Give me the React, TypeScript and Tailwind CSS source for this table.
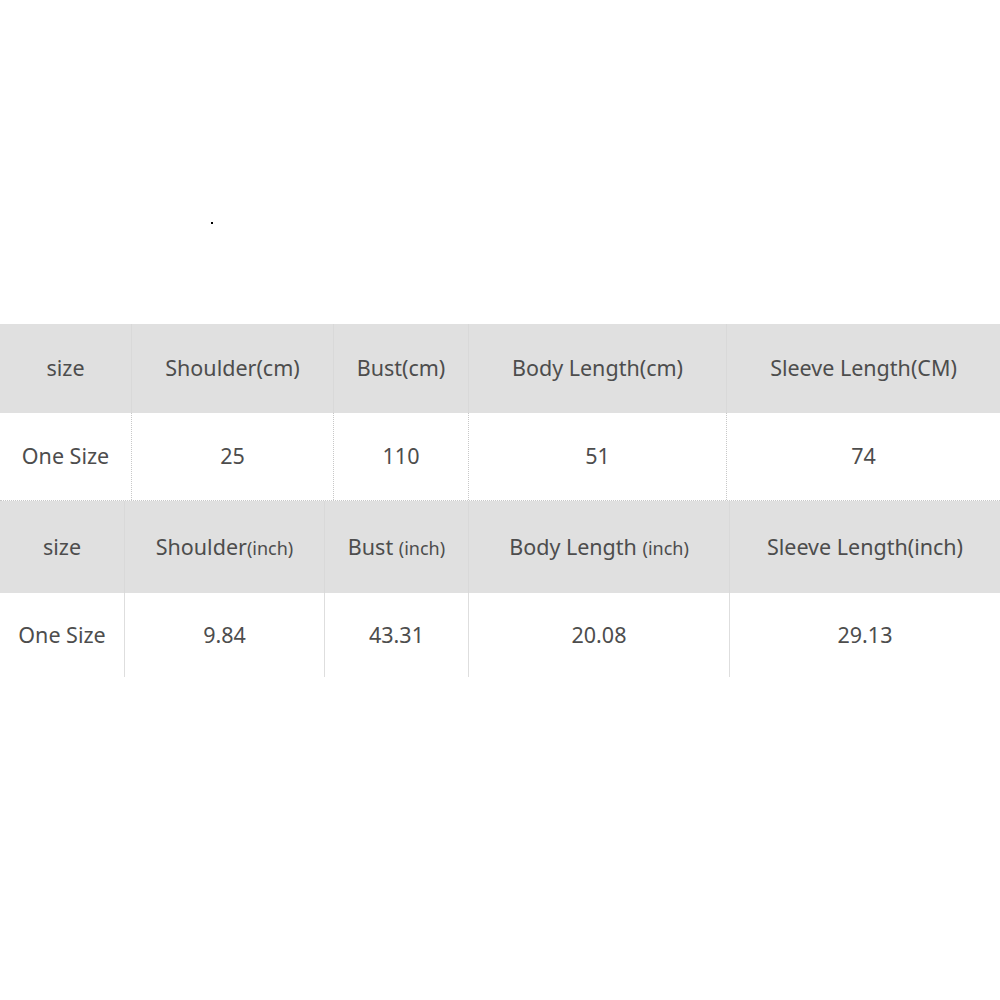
const cm = {
  cols: "grid-cols-[131px_202px_135px_258px_274px]",
  head: [
    { main: "size" },
    { main: "Shoulder(cm)" },
    { main: "Bust(cm)" },
    { main: "Body Length(cm)" },
    { main: "Sleeve Length(CM)" },
  ],
  row: ["One Size", "25", "110", "51", "74"],
};

const inch = {
  cols: "grid-cols-[124px_200px_144px_261px_271px]",
  head: [
    { main: "size" },
    { main: "Shoulder", unit: "(inch)" },
    { main: "Bust ", unit: "(inch)" },
    { main: "Body Length ", unit: "(inch)" },
    { main: "Sleeve Length(inch)" },
  ],
  row: ["One Size", "9.84", "43.31", "20.08", "29.13"],
};

type Head = { main: string; unit?: string };

function SizeTable({
  cols,
  head,
  row,
  headH,
  rowH,
  dotted,
}: {
  cols: string;
  head: Head[];
  row: string[];
  headH: string;
  rowH: string;
  dotted?: boolean;
}) {
  return (
    <div>
      <div className={`grid ${cols} bg-[#e0e0e0] ${headH}`}>
        {head.map((h, i) => (
          <div
            key={i}
            className={`flex items-center justify-center ${
              i > 0 ? "border-l border-[#d9d9d9]" : ""
            }`}
          >
            <span className="whitespace-pre">
              {h.main}
              {h.unit && <span className="text-[18px]">{h.unit}</span>}
            </span>
          </div>
        ))}
      </div>
      <div className={`grid ${cols} bg-white ${rowH}`}>
        {row.map((v, i) => (
          <div
            key={i}
            className={`flex items-center justify-center ${
              i > 0
                ? dotted
                  ? "border-l border-dotted border-[#c8c8c8]"
                  : "border-l border-[#dedede]"
                : ""
            }`}
          >
            {v}
          </div>
        ))}
      </div>
    </div>
  );
}

export default function App() {
  return (
    <div className="w-[1000px] h-[1000px] bg-white text-[21.5px] text-[#4d4d4d] font-['Noto_Sans','Open_Sans',sans-serif]">
      <div className="pt-[222px] pl-[211px] h-[324px]">
        <div className="w-[2px] h-[2px] bg-black" />
      </div>
      <SizeTable {...cm} headH="h-[89px]" rowH="h-[87px]" dotted />
      <div className="border-t border-dotted border-[#c8c8c8]">
        <SizeTable {...inch} headH="h-[92px]" rowH="h-[84px]" />
      </div>
    </div>
  );
}
